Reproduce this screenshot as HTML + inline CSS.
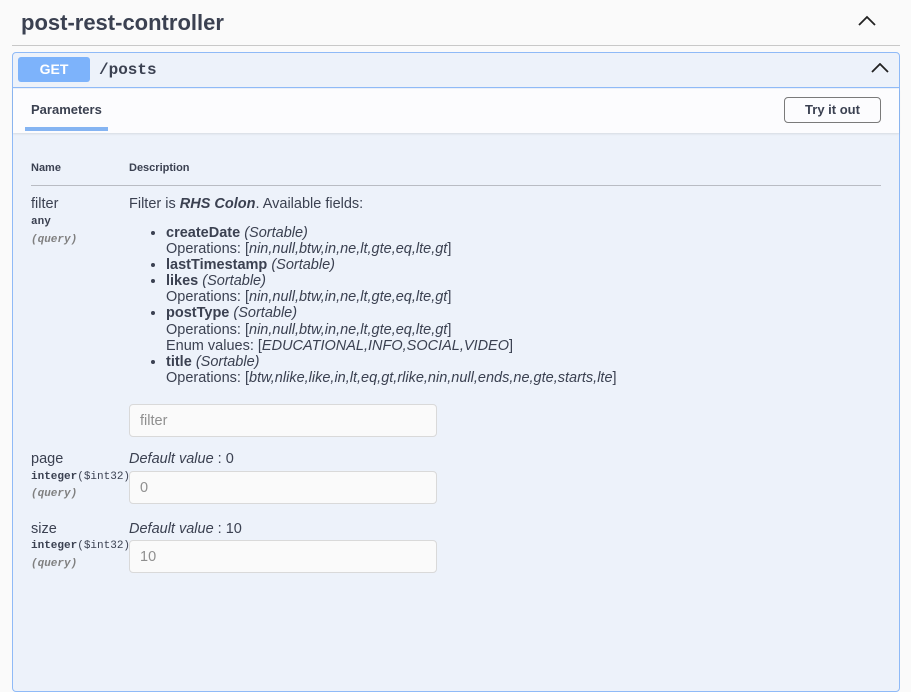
<!DOCTYPE html>
<html><head><meta charset="utf-8"><style>
*{margin:0;padding:0;box-sizing:border-box}
body{width:911px;height:635px;overflow:hidden;background:#fafafa;font-family:"Liberation Sans",sans-serif;color:#3b4151;position:relative}
.a{position:absolute}
h1{position:absolute;left:21px;top:10px;font-size:22px;font-weight:bold;color:#3b4151}
.hr{left:12px;top:45px;width:888px;height:1px;background:#c8c8c8}
.blk{left:12px;top:52px;width:888px;height:640px;border:1px solid #8fbaf7;border-radius:4px;background:#edf2fa}
.hdr{left:13px;top:53px;width:886px;height:35px;border-bottom:1px solid #8fbaf7}
.get{left:18px;top:57px;width:72px;height:25px;background:#7db3fb;border-radius:3px;color:#fff;font-weight:bold;font-size:14px;text-align:center;line-height:25px}
.path{left:99px;top:61px;font-family:"Liberation Mono",monospace;font-weight:bold;font-size:16px;color:#3b4151}
.tabs{left:13px;top:89px;width:886px;height:44px;background:#fcfcfe;box-shadow:0 1px 2px rgba(0,0,0,.1)}
.ptab{left:31px;top:102px;font-size:13px;font-weight:bold}
.uline{left:25px;top:127px;width:83px;height:4px;background:#85b4f2}
.btn{left:784px;top:97px;width:97px;height:26px;border:1px solid #7a7a7a;border-radius:4px;font-size:13px;font-weight:bold;text-align:center;line-height:24px}
.th{font-size:11px;font-weight:bold;top:162px}
.tl{left:31px;top:185px;width:850px;height:1px;background:#b9bcc3}
.nm{font-size:14.5px;left:31px}
.ty{font-family:"Liberation Mono",monospace;font-size:11px;font-weight:bold;left:31px}
.q{font-family:"Liberation Mono",monospace;font-size:11px;font-style:italic;font-weight:bold;color:#808080;left:31px}
.d{font-size:14.5px;left:129px}
ul{position:absolute;left:166px;top:225px;font-size:14.5px;line-height:16.1px;list-style:disc}
li{margin:0}
.inp{left:129px;width:308px;height:33px;border:1px solid #d9d9d9;border-radius:4px;background:#fafafa;font-size:14.5px;color:#8f8f8f;padding-left:10px;line-height:32px}
svg{position:absolute}
</style></head><body>
<h1>post-rest-controller</h1>
<svg style="left:857px;top:15px" width="20" height="12" viewBox="0 0 20 12"><path d="M2 10 L10 2 L18 10" fill="none" stroke="#222" stroke-width="1.8"/></svg>
<div class="a hr"></div>
<div class="a blk"></div>
<div class="a hdr"></div>
<div class="a get">GET</div>
<div class="a path">/posts</div>
<svg style="left:871px;top:63px" width="18" height="11" viewBox="0 0 18 11"><path d="M1 9 L9 1 L17 9" fill="none" stroke="#222" stroke-width="1.8"/></svg>
<div class="a tabs"></div>
<div class="a ptab">Parameters</div>
<div class="a uline"></div>
<div class="a btn">Try it out</div>
<div class="a th" style="left:31px">Name</div>
<div class="a th" style="left:129px">Description</div>
<div class="a tl"></div>

<div class="a nm" style="top:196px">filter</div>
<div class="a ty" style="top:216px">any</div>
<div class="a q" style="top:234px">(query)</div>
<div class="a d" style="top:196px">Filter is <b><i>RHS Colon</i></b>. Available fields:</div>
<ul>
<li><b>createDate</b> <i>(Sortable)</i><br>Operations: [<i>nin,null,btw,in,ne,lt,gte,eq,lte,gt</i>]</li>
<li><b>lastTimestamp</b> <i>(Sortable)</i></li>
<li><b>likes</b> <i>(Sortable)</i><br>Operations: [<i>nin,null,btw,in,ne,lt,gte,eq,lte,gt</i>]</li>
<li><b>postType</b> <i>(Sortable)</i><br>Operations: [<i>nin,null,btw,in,ne,lt,gte,eq,lte,gt</i>]<br>Enum values: [<i>EDUCATIONAL,INFO,SOCIAL,VIDEO</i>]</li>
<li><b>title</b> <i>(Sortable)</i><br>Operations: [<i>btw,nlike,like,in,lt,eq,gt,rlike,nin,null,ends,ne,gte,starts,lte</i>]</li>
</ul>
<div class="a inp" style="top:404px">filter</div>

<div class="a nm" style="top:451px">page</div>
<div class="a ty" style="top:471px">integer<span style="font-weight:normal">($int32)</span></div>
<div class="a q" style="top:488px">(query)</div>
<div class="a d" style="top:451px"><i>Default value</i> : 0</div>
<div class="a inp" style="top:471px">0</div>

<div class="a nm" style="top:521px">size</div>
<div class="a ty" style="top:540px">integer<span style="font-weight:normal">($int32)</span></div>
<div class="a q" style="top:558px">(query)</div>
<div class="a d" style="top:521px"><i>Default value</i> : 10</div>
<div class="a inp" style="top:540px">10</div>
</body></html>
